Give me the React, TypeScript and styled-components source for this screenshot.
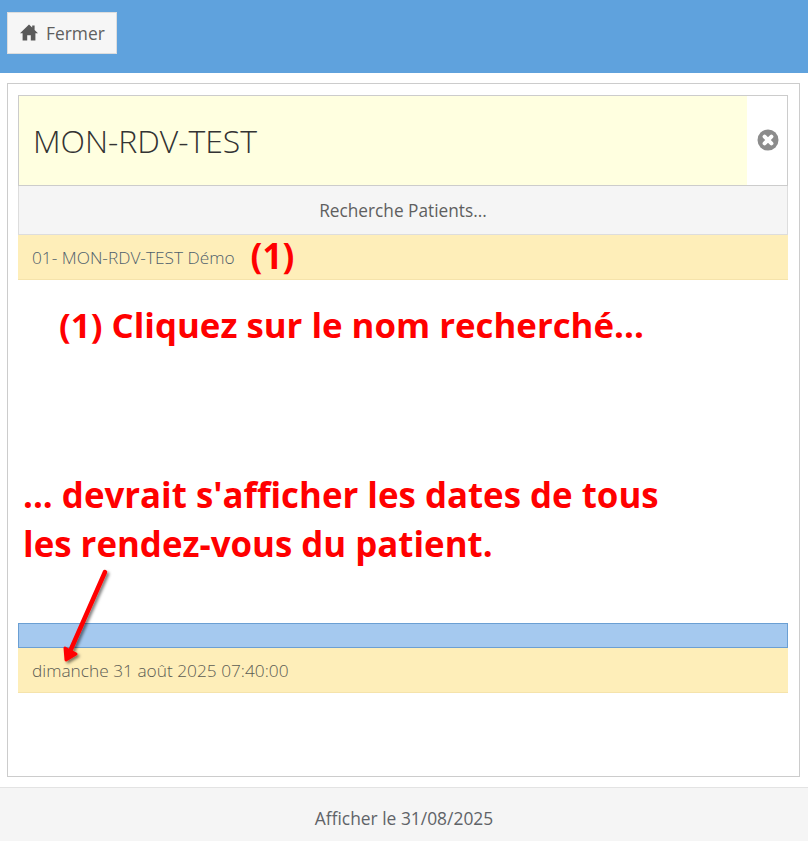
import React from 'react';
import styled, { createGlobalStyle } from 'styled-components';

const Global = createGlobalStyle`
  html, body { margin: 0; padding: 0; background: #fff; }
  body { font-family: "Open Sans", "Liberation Sans", sans-serif; font-size: 16px; color: #555; }
  * { box-sizing: border-box; }
`;
const Page = styled.div`
  width: 808px; height: 841px; display: flex; flex-direction: column; overflow: hidden;
`;
const Header = styled.header`
  height: 73px; background: #5fa2dd; padding: 12px 7px 0; flex: none;
`;
const CloseButton = styled.button`
  width: 110px; height: 42px; display: flex; align-items: center; gap: 8px; padding: 0 0 1px 12px;
  background: #f6f6f6; border: 1px solid #ddd; color: #5f5f5f;
  font: 400 17.400px "Open Sans", sans-serif;
`;
const Panel = styled.main`
  position: relative; flex: none; height: 694px; margin: 10px 8px 0 7px; padding: 11px 11px 0 10px;
  border: 1px solid #ccc; display: flex; flex-direction: column;
`;
const SearchBox = styled.div`
  height: 91px; display: flex; border: 1px solid #ccc; background: #fff; flex: none;
`;
const SearchField = styled.div`
  width: 728px; background: #ffffe0; padding: 0 14px; display: flex; align-items: center;
  font-size: 32px; font-weight: 300; color: #333; letter-spacing: -0.05px;
`;
const ClearSlot = styled.div`
  flex: 1; display: flex; align-items: center; justify-content: center; padding: 0 0 2px 1px;
`;
const SearchButton = styled.div`
  height: 49px; flex: none; display: flex; align-items: center; justify-content: center; padding-top: 1px;
  background: #f5f5f5; border: 1px solid #ddd; border-top: 0; color: #5f5f5f; font-size: 17.250px;
`;
const ResultRow = styled.div`
  height: 45px; flex: none; display: flex; align-items: center; padding: 1px 14px 0;
  background: #feeeb9; border-bottom: 1px solid #f5e3ab; color: #4f606c; font-size: 17.300px; font-weight: 300;
`;
const DateText = styled.span`
  color: #5c5c54;
`;
const Marker = styled.span`
  margin-left: 16px; color: #f00; font-size: 35px; font-weight: 700; line-height: 40px; position: relative; top: -2px;
`;
const Instruction = styled.p`
  margin: 20px 0 0 41px; height: 50px; color: #f00; font-size: 34.800px; font-weight: 700; line-height: 50px; white-space: nowrap;
`;
const Explanation = styled.p`
  margin: 120px 0 0 5px; height: 98px; color: #f00; font-size: 34.850px; font-weight: 700; line-height: 49px; white-space: nowrap;
`;
const BlueBar = styled.div`
  height: 25px; flex: none; margin-top: 55px; background: #a5c9ef; border: 1px solid #6b9fd3;
`;
const Arrow = styled.svg`
  position: absolute; left: 40px; top: 476px; overflow: visible;
`;
const Footer = styled.footer`
  margin-top: 10px; flex: 1; display: flex; align-items: center; justify-content: center; padding-top: 6px;
  background: #f5f5f5; border-top: 1px solid #e3e3e3; color: #5f6368; font-size: 17.400px;
`;

const HomeIcon = () => (
  <svg width="18" height="17" viewBox="0 0 18 17" aria-hidden="true">
    <path fill="#5a5a5a" d="M9 .5 0 9.200h2.600V16.500h4.600v-5.200h3.600v5.200h4.600V9.200H18l-3.400-3.300V1.500h-2.400v2.100L9 .5Z" />
  </svg>
);
const ClearIcon = () => (
  <svg width="22" height="22" viewBox="0 0 22 22" aria-hidden="true">
    <circle cx="11" cy="11" r="10.500" fill="#8c8c8c" />
    <path stroke="#fff" strokeWidth="4" strokeLinecap="round" d="M7.600 7.600l6.800 6.800M14.400 7.600l-6.800 6.800" />
  </svg>
);

export default function App() {
  return (
    <Page>
      <Global />
      <Header>
        <CloseButton><HomeIcon />Fermer</CloseButton>
      </Header>
      <Panel>
        <SearchBox>
          <SearchField>MON-RDV-TEST</SearchField>
          <ClearSlot><ClearIcon /></ClearSlot>
        </SearchBox>
        <SearchButton>Recherche Patients...</SearchButton>
        <ResultRow>01- MON-RDV-TEST Démo<Marker>(1)</Marker></ResultRow>
        <Instruction>(1) Cliquez sur le nom recherché...</Instruction>
        <Explanation>... devrait s'afficher les dates de tous<br />les rendez-vous du patient.</Explanation>
        <BlueBar />
        <ResultRow><DateText>dimanche 31 août 2025 07:40:00</DateText></ResultRow>
        <Arrow width="70" height="100" viewBox="0 0 70 100" aria-hidden="true">
          <defs>
            <filter id="arrowShadow" x="-50%" y="-20%" width="200%" height="140%">
              <feDropShadow dx="2" dy="2" stdDeviation="1.500" floodColor="#000" floodOpacity="0.5" />
            </filter>
          </defs>
          <g filter="url(#arrowShadow)" fill="#f00" stroke="#f00" strokeLinecap="round" strokeLinejoin="round">
            <path strokeWidth="4.500" fill="none" d="M57 12 20 96" />
            <path strokeWidth="3" d="M17 88 18 100 28 94Z" />
          </g>
        </Arrow>
      </Panel>
      <Footer>Afficher le 31/08/2025</Footer>
    </Page>
  );
}
